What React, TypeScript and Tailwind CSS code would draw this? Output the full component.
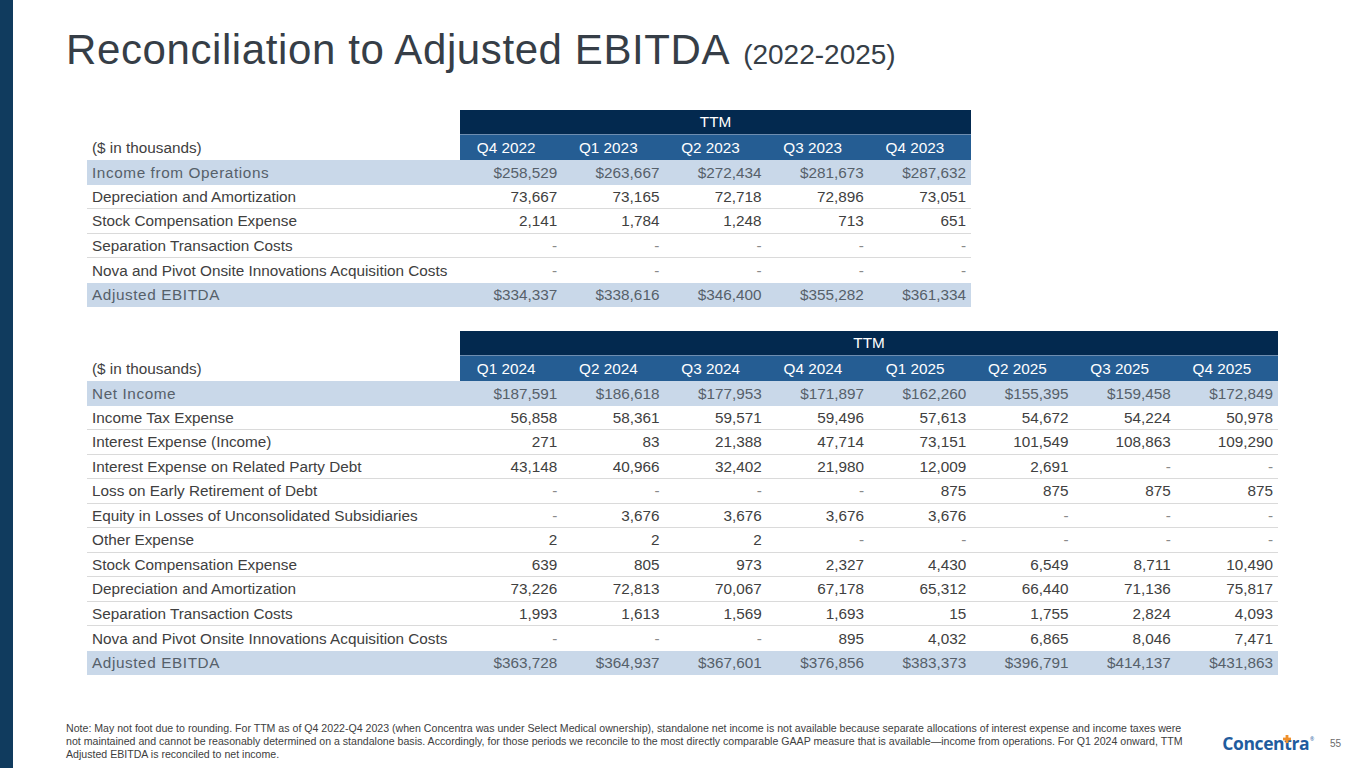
import React from 'react';

type Row = { label: string; values: string[]; total?: boolean };

const table1Cols = ['Q4 2022', 'Q1 2023', 'Q2 2023', 'Q3 2023', 'Q4 2023'];
const table1Rows: Row[] = [
    { label: 'Income from Operations', values: ['$258,529', '$263,667', '$272,434', '$281,673', '$287,632'], total: true },
    { label: 'Depreciation and Amortization', values: ['73,667', '73,165', '72,718', '72,896', '73,051'] },
    { label: 'Stock Compensation Expense', values: ['2,141', '1,784', '1,248', '713', '651'] },
    { label: 'Separation Transaction Costs', values: ['-', '-', '-', '-', '-'] },
    { label: 'Nova and Pivot Onsite Innovations Acquisition Costs', values: ['-', '-', '-', '-', '-'] },
    { label: 'Adjusted EBITDA', values: ['$334,337', '$338,616', '$346,400', '$355,282', '$361,334'], total: true },
];

const table2Cols = ['Q1 2024', 'Q2 2024', 'Q3 2024', 'Q4 2024', 'Q1 2025', 'Q2 2025', 'Q3 2025', 'Q4 2025'];
const table2Rows: Row[] = [
    { label: 'Net Income', values: ['$187,591', '$186,618', '$177,953', '$171,897', '$162,260', '$155,395', '$159,458', '$172,849'], total: true },
    { label: 'Income Tax Expense', values: ['56,858', '58,361', '59,571', '59,496', '57,613', '54,672', '54,224', '50,978'] },
    { label: 'Interest Expense (Income)', values: ['271', '83', '21,388', '47,714', '73,151', '101,549', '108,863', '109,290'] },
    { label: 'Interest Expense on Related Party Debt', values: ['43,148', '40,966', '32,402', '21,980', '12,009', '2,691', '-', '-'] },
    { label: 'Loss on Early Retirement of Debt', values: ['-', '-', '-', '-', '875', '875', '875', '875'] },
    { label: 'Equity in Losses of Unconsolidated Subsidiaries', values: ['-', '3,676', '3,676', '3,676', '3,676', '-', '-', '-'] },
    { label: 'Other Expense', values: ['2', '2', '2', '-', '-', '-', '-', '-'] },
    { label: 'Stock Compensation Expense', values: ['639', '805', '973', '2,327', '4,430', '6,549', '8,711', '10,490'] },
    { label: 'Depreciation and Amortization', values: ['73,226', '72,813', '70,067', '67,178', '65,312', '66,440', '71,136', '75,817'] },
    { label: 'Separation Transaction Costs', values: ['1,993', '1,613', '1,569', '1,693', '15', '1,755', '2,824', '4,093'] },
    { label: 'Nova and Pivot Onsite Innovations Acquisition Costs', values: ['-', '-', '-', '895', '4,032', '6,865', '8,046', '7,471'] },
    { label: 'Adjusted EBITDA', values: ['$363,728', '$364,937', '$367,601', '$376,856', '$383,373', '$396,791', '$414,137', '$431,863'], total: true },
];

const Table = ({ cols, rows, width }: { cols: string[]; rows: Row[]; width: string }) => {
    return (
        <div className={`${width} text-[15.3px] leading-none`}>
            {/* TTM band */}
            <div className="flex h-[25px]">
                <div className="w-[373px] shrink-0" />
                <div className="flex-1 bg-[#03294f] text-white flex items-center justify-center border-b border-[#6e8db0]">
                    TTM
                </div>
            </div>
            {/* quarter row */}
            <div className="flex h-[25px]">
                <div className="w-[373px] shrink-0 pl-[5px] flex items-center text-[#404040]">($ in thousands)</div>
                {cols.map((c) => (
                    <div key={c} className="flex-1 bg-[#255d93] text-white flex items-center justify-center pr-[10px]">
                        {c}
                    </div>
                ))}
            </div>
            {rows.map((r, i) => {
                const last = i === rows.length - 1;
                const nextTotal = !last && rows[i + 1].total;
                return (
                    <div
                        key={r.label}
                        className={`flex h-[24.5px] ${r.total ? 'bg-[#c9d8e9] text-[#56606a]' : 'text-[#404040]'} ${
                            !r.total && !nextTotal ? 'border-b border-[#dadada]' : ''
                        }`}
                    >
                        <div
                            className={`w-[373px] shrink-0 pl-[5px] flex items-center whitespace-nowrap ${
                                r.total ? 'tracking-[0.6px]' : ''
                            }`}
                        >
                            {r.label}
                        </div>
                        {r.values.map((v, j) => (
                            <div
                                key={j}
                                className={`flex-1 flex items-center justify-end pr-[5px] ${v === '-' ? 'text-[#8a8a8a]' : ''}`}
                            >
                                {v}
                            </div>
                        ))}
                    </div>
                );
            })}
        </div>
    );
};

const Logo = () => (
    <div className="flex items-start font-['Open_Sans',sans-serif] font-bold text-[17.5px] leading-none text-[#1f5c9e] tracking-[-0.4px]">
        <span>Concen</span>
        <span className="relative">
            t
            <svg className="absolute left-[-1px] top-[0px]" width="8" height="8" viewBox="0 0 8 8">
                <rect x="2.6" y="0" width="2.8" height="8" fill="#f0902a" />
                <rect x="0" y="2.6" width="8" height="2.8" fill="#f0902a" />
            </svg>
        </span>
        <span>ra</span>
        <span className="text-[5px] font-normal ml-[1px] mt-[2px]">®</span>
    </div>
);

export default function App() {
    return (
        <div className="w-[1365px] h-[768px] flex bg-white font-['Liberation_Sans',Arial,sans-serif] overflow-hidden">
            <div className="w-[13px] shrink-0 bg-[#103b5e]" />
            <div className="flex-1 pl-[53px] flex flex-col">
                <h1 className="pt-[29px] leading-none text-[#363e47] whitespace-nowrap">
                    <span className="text-[42px] tracking-[0.6px]">Reconciliation to Adjusted EBITDA</span>
                    <span className="text-[28px] ml-[13px]">(2022-2025)</span>
                </h1>

                <div className="ml-[21px] mt-[39px] flex flex-col gap-[24px]">
                    <Table cols={table1Cols} rows={table1Rows} width="w-[884px]" />
                    <Table cols={table2Cols} rows={table2Rows} width="w-[1191px]" />
                </div>

                <div className="mt-[47px] flex items-start pr-[24px]">
                    <p className="text-[10.6px] leading-[12.8px] text-[#404040] whitespace-nowrap">
                        Note: May not foot due to rounding. For TTM as of Q4 2022-Q4 2023 (when Concentra was under Select Medical ownership), standalone net income is not available because separate allocations of interest expense and income taxes were
                        <br />
                        not maintained and cannot be reasonably determined on a standalone basis. Accordingly, for those periods we reconcile to the most directly comparable GAAP measure that is available—income from operations. For Q1 2024 onward, TTM
                        <br />
                        Adjusted EBITDA is reconciled to net income.
                    </p>
                    <div className="ml-auto mt-[13px] flex items-center gap-[16px]">
                        <Logo />
                        <span className="text-[10px] text-[#6b6b6b]">55</span>
                    </div>
                </div>
            </div>
        </div>
    );
}
